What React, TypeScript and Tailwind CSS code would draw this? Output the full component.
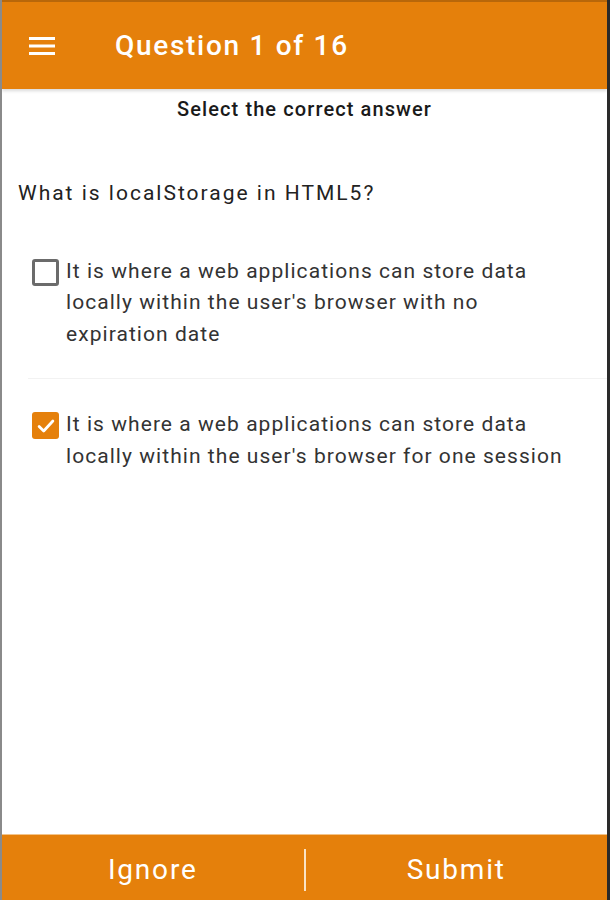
import React, { useState } from 'react';

const options = [
  "It is where a web applications can store data locally within the user's browser with no expiration date",
  "It is where a web applications can store data locally within the user's browser for one session",
];

const Checkbox: React.FC<{ checked: boolean }> = ({ checked }) =>
  checked ? (
    <span className="flex h-[27px] w-[27px] shrink-0 items-center justify-center rounded-[3px] bg-[#e5800b]">
      <svg viewBox="0 0 24 24" className="h-[22px] w-[22px]" fill="none" stroke="white" strokeWidth="3" strokeLinecap="round" strokeLinejoin="round">
        <path d="M4.5 12.5l5 5L19.5 6.5" />
      </svg>
    </span>
  ) : (
    <span className="block h-[27px] w-[27px] shrink-0 rounded-[3px] border-[3px] border-[#6b6b6b]" />
  );

export default function App() {
  const [selected, setSelected] = useState(1);

  return (
    <div className="flex h-[900px] w-[610px] flex-col overflow-hidden border-l-2 border-r-[3px] border-l-[#8a8a8a] border-r-[#2a2a2a] bg-white font-['Roboto',sans-serif]">
      <header className="flex h-[89px] shrink-0 items-center border-t-2 border-t-[#b8670a] bg-[#e5800b] shadow-[0_2px_3px_rgba(0,0,0,0.15)]">
        <svg viewBox="0 0 28 20" className="ml-[25px] h-[20px] w-[30px]" fill="none" stroke="white" strokeWidth="3">
          <path d="M1 2.5h26M1 10h26M1 17.5h26" />
        </svg>
        <h1 className="ml-[58px] text-[28px] font-medium tracking-[1.7px] text-white">Question 1 of 16</h1>
      </header>

      <main className="flex-1">
        <p className="mt-[5px] text-center text-[20px] font-medium tracking-[1.1px] text-[#1a1a1a]">Select the correct answer</p>
        <p className="ml-[16px] mt-[54px] text-[21px] tracking-[2px] text-[#222]">What is localStorage in HTML5?</p>

        <div className="mt-[46px]">
          {options.map((text, i) => (
            <div key={i}>
              {i > 0 && <div className="ml-[26px] h-px bg-[#f2f2f2]" />}
              <button
                onClick={() => setSelected(i)}
                className={`flex w-full items-start gap-[7px] pl-[30px] pr-[35px] text-left ${i === 0 ? 'pb-[28px]' : 'pt-[30px]'}`}
              >
                <span className="mt-[3px]">
                  <Checkbox checked={selected === i} />
                </span>
                <span className="text-[21px] leading-[31.5px] tracking-[1.05px] text-[#333]">{text}</span>
              </button>
            </div>
          ))}
        </div>
      </main>

      <footer className="flex h-[66px] shrink-0 items-center border-t border-t-[#f3c48a] bg-[#e5800b] pt-[4px] text-white">
        <button className="flex-1 text-center text-[28px] tracking-[1.8px]">Ignore</button>
        <span className="h-[42px] w-[2px] bg-[#fbe3c4]" />
        <button className="flex-1 text-center text-[28px] tracking-[1.8px]">Submit</button>
      </footer>
    </div>
  );
}
